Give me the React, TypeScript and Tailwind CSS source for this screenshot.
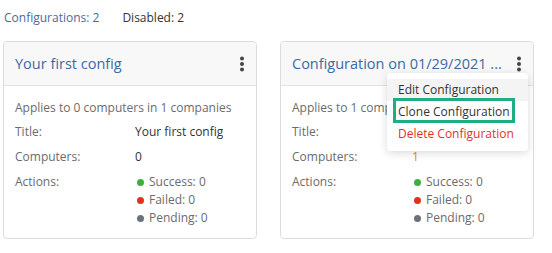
import { ReactNode } from "react";

const Dots = () => (
  <svg width="6" height="16" viewBox="0 0 6 16" className="fill-[#444]">
    <circle cx="3" cy="2.5" r="2" />
    <circle cx="3" cy="8" r="2" />
    <circle cx="3" cy="13.5" r="2" />
  </svg>
);

const Status = ({ color, label }: { color: string; label: string }) => (
  <div className="flex items-center gap-[5px] h-[18px] pl-[2px]">
    <span className={`w-[7px] h-[7px] rounded-full ${color}`} />
    <span>{label}</span>
  </div>
);

const Row = ({ label, children }: { label: string; children: ReactNode }) => (
  <div className="flex">
    <div className="w-[120px] shrink-0">{label}</div>
    <div className="whitespace-nowrap max-w-[112px] overflow-hidden">{children}</div>
  </div>
);

const Card = ({
  title,
  applies,
  name,
  computers,
  computersColor,
  menu,
}: {
  title: string;
  applies: string;
  name: string;
  computers: string;
  computersColor: string;
  menu?: boolean;
}) => (
  <div className="relative w-[254px] h-[198px] border border-[#dcdcdc] rounded-[4px] bg-white">
    {/* header */}
    <div className="h-[44px] flex items-center justify-between pl-[11px] pr-[11px] bg-[#f8f8f8] border-b border-[#e2e2e2] rounded-t-[4px]">
      <h2 className="text-[14.5px] text-[#3c6aa3] whitespace-nowrap">{title}</h2>
      <div className="pl-2"><Dots /></div>
    </div>
    {/* body */}
    <div className="pl-[11px] pt-[12px] text-[12px] text-[#6b6b6b] flex flex-col">
      <div className="h-[20px] leading-[20px]">{applies}</div>
      <div className="mt-[5px] flex flex-col gap-[7px] leading-[18px]">
        <Row label="Title:">
          <span className="text-[#333]">{name}</span>
        </Row>
        <Row label="Computers:">
          <span className={computersColor}>{computers}</span>
        </Row>
        <Row label="Actions:">
          <div className="flex flex-col">
            <Status color="bg-[#3fae3f]" label="Success: 0" />
            <Status color="bg-[#e2321f]" label="Failed: 0" />
            <Status color="bg-[#6c727c]" label="Pending: 0" />
          </div>
        </Row>
      </div>
    </div>
    {menu && (
      <div className="absolute left-[106px] top-[31px] w-[141px] py-[6px] bg-white rounded-[4px] shadow-[0_2px_8px_rgba(0,0,0,0.15)] text-[12px]">
        <div className="h-[22px] leading-[22px] pl-[11px] bg-[#f4f4f4] text-[#333]">Edit Configuration</div>
        <div className="relative h-[22px] leading-[22px] pl-[11px] text-[#333]">
          Clone Configuration
          <div className="absolute left-[6px] top-[-3px] w-[122px] h-[25px] border-[3px] border-[#1fae84]" />
        </div>
        <div className="h-[22px] leading-[22px] pl-[11px] text-[#e2321f]">Delete Configuration</div>
      </div>
    )}
  </div>
);

export default function App() {
  return (
    <div className="w-[552px] h-[253px] bg-white font-['Open_Sans',sans-serif] pl-[3px] pt-[8px]">
      <div className="flex gap-[23px] text-[12px] leading-[20px] pl-[1px]">
        <span className="text-[#4a6b98]">Configurations: 2</span>
        <span className="text-[#333]">Disabled: 2</span>
      </div>
      <div className="flex gap-[23px] mt-[13px]">
        <Card
          title="Your first config"
          applies="Applies to 0 computers in 1 companies"
          name="Your first config"
          computers="0"
          computersColor="text-[#333]"
        />
        <Card
          title="Configuration on 01/29/2021 ..."
          applies="Applies to 1 computers in 1 companies"
          name="Configuration"
          computers="1"
          computersColor="text-[#e98a2c]"
          menu
        />
      </div>
    </div>
  );
}
